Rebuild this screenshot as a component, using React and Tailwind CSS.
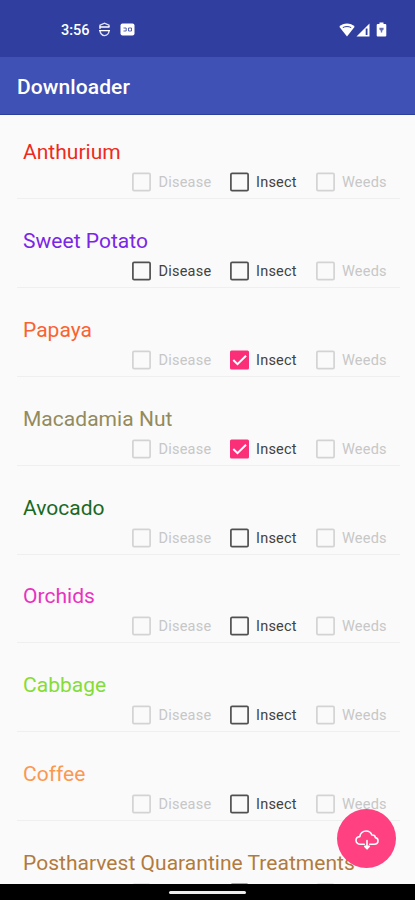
import { useState } from "react";

const crops = [
  { name: "Anthurium", color: "text-[#ee2a20]", enabled: ["Insect"], checked: [] },
  { name: "Sweet Potato", color: "text-[#7a26e6]", enabled: ["Disease", "Insect"], checked: [] },
  { name: "Papaya", color: "text-[#f96332]", enabled: ["Insect"], checked: ["Insect"] },
  { name: "Macadamia Nut", color: "text-[#948a5c]", enabled: ["Insect"], checked: ["Insect"] },
  { name: "Avocado", color: "text-[#19691f]", enabled: ["Insect"], checked: [] },
  { name: "Orchids", color: "text-[#e832c0]", enabled: ["Insect"], checked: [] },
  { name: "Cabbage", color: "text-[#86dc37]", enabled: ["Insect"], checked: [] },
  { name: "Coffee", color: "text-[#fb9850]", enabled: ["Insect"], checked: [] },
  { name: "Postharvest Quarantine Treatments", color: "text-[#b27a3e]", enabled: ["Insect"], checked: [] },
];

const columns = [
  { label: "Disease", width: "w-[97.5px]" },
  { label: "Insect", width: "w-[86px]" },
  { label: "Weeds", width: "w-[84px]" },
];

const StatusBar = () => (
  <div className="h-[57px] shrink-0 bg-[#303f9f] flex items-center justify-between pt-[2px] pl-[61px] pr-[28px] text-white">
    <div className="flex items-center">
      <span className="w-[29px] pt-[3px] text-[14.5px] font-medium leading-none">3:56</span>
      <svg className="ml-[8px]" width="13" height="15" viewBox="0 0 13 15" fill="none" stroke="currentColor" strokeWidth="1.4">
        <path d="M2 5V3.2L6.5 1.2L11 3.2V5M2 8.6C2 11 4 13.6 6.5 13.6C9 13.6 11 11.4 11 8.6M2 5V7" strokeOpacity="0.85" />
        <path d="M1.5 5H11.5M1 8.6H12" />
      </svg>
      <svg className="ml-[9px]" width="15" height="13" viewBox="0 0 15 13">
        <rect x="0.5" y="0.5" width="14" height="12" rx="2" fill="currentColor" />
        <path d="M3.5 5H6.2V8H3.5M8.5 5H11.5V8H8.5Z" fill="none" stroke="#303f9f" strokeOpacity="0.8" strokeWidth="1" />
      </svg>
    </div>
    <div className="flex items-center">
      <svg width="16" height="14" viewBox="0 0 16 14">
        <path d="M0.3 3.7C4.5-0.6 11.5-0.6 15.7 3.7L8 13.5Z" fill="currentColor" />
        <path d="M3.8 4.6C6.2 3.2 9.8 3.2 12.2 4.6" fill="none" stroke="#303f9f" strokeWidth="1" />
      </svg>
      <svg className="ml-[1px]" width="14" height="14" viewBox="0 0 14 14">
        <path d="M13.5 0.5V13.5H0.5Z" fill="currentColor" />
        <path d="M10.6 5.5V12" stroke="#303f9f" strokeWidth="1.8" />
      </svg>
      <svg className="ml-[6px]" width="11" height="15" viewBox="0 0 11 15">
        <path d="M3.5 0.5H7.5V2H9.2Q10.3 2 10.3 3V13.4Q10.3 14.5 9.2 14.5H1.8Q0.7 14.5 0.7 13.4V3Q0.7 2 1.8 2H3.5Z" fill="currentColor" />
        <path d="M3.4 5.8H7.6V7.4L6.2 8.8V10.4H4.8V8.8L3.4 7.4Z" fill="#303f9f" fillOpacity="0.75" />
      </svg>
    </div>
  </div>
);

const CheckOption = ({ label, width, enabled, checked, onToggle }) => (
  <button
    type="button"
    role="checkbox"
    aria-checked={checked}
    disabled={!enabled}
    onClick={onToggle}
    className={`${width} flex items-start shrink-0 text-left`}
  >
    <svg className="shrink-0" width="19" height="20" viewBox="0 0 19 20" fill="none">
      {checked ? (
        <>
          <rect x="0" y="0.5" width="19" height="19" rx="1.5" fill="#fa2f78" />
          <path d="M3.3 10L7.5 14.2L16 5.7" stroke="#fff" strokeWidth="2" />
        </>
      ) : (
        <rect x="0.9" y="1.4" width="17.2" height="17.2" rx="1.2" stroke={enabled ? "#505050" : "#d3d3d3"} strokeWidth="1.7" />
      )}
    </svg>
    <span className={`ml-[7.5px] text-[14.5px] leading-[22px] tracking-[0.22px] ${enabled ? "text-[#424242]" : "text-[#c7c7c7]"}`}>
      {label}
    </span>
  </button>
);

const App = () => {
  const [selected, setSelected] = useState(() =>
    Object.fromEntries(crops.map((crop) => [crop.name, crop.checked]))
  );

  const toggle = (name, label) => {
    setSelected((prev) => ({
      ...prev,
      [name]: prev[name].includes(label)
        ? prev[name].filter((item) => item !== label)
        : [...prev[name], label],
    }));
  };

  return (
    <div className="relative h-screen w-full overflow-hidden flex flex-col bg-[#fafafa] font-['Roboto',sans-serif]">
      <StatusBar />

      <header className="h-[58px] shrink-0 bg-[#3f51b5] border-b border-[#2c3f9c] flex items-center pl-[17px] pt-[5px]">
        <h1 className="text-[21px] font-medium text-white tracking-[0.1px]">Downloader</h1>
      </header>

      {/* Crop list */}
      <main className="flex-1 min-h-0 overflow-hidden flex flex-col gap-[4.9px] pl-[17px] pr-[15px]">
        {crops.map((crop) => (
          <section key={crop.name} className="h-[84px] shrink-0 border-b border-[#efefef] pt-[22px]">
            <h2 className={`pl-[6px] text-[21px] leading-[30px] tracking-[0.03px] whitespace-nowrap ${crop.color}`}>
              {crop.name}
            </h2>
            <div className="flex pl-[115px] mt-[5px]">
              {columns.map((column) => (
                <CheckOption
                  key={column.label}
                  label={column.label}
                  width={column.width}
                  enabled={crop.enabled.includes(column.label)}
                  checked={selected[crop.name].includes(column.label)}
                  onToggle={() => toggle(crop.name, column.label)}
                />
              ))}
            </div>
          </section>
        ))}
      </main>

      {/* Gesture navigation bar */}
      <div className="h-[16px] shrink-0 bg-black flex items-center justify-center">
        <div className="w-[77px] h-[3px] rounded-full bg-[#ececec]" />
      </div>

      {/* Floating download button */}
      <button
        type="button"
        aria-label="Download"
        className="absolute right-[19px] bottom-[32.5px] size-[59px] rounded-full bg-[#ff4081] text-white flex items-center justify-center"
      >
        <svg className="mt-[3px]" width="24" height="20" viewBox="0 0 24 20" fill="none" stroke="currentColor" strokeWidth="1.6" strokeLinecap="round" strokeLinejoin="round">
          <path d="M9.3 14.2H5.3C2.9 14.2 1 12.6 1 10.3C1 8.2 2.6 6.8 4.8 6.6C5 3.3 7.8 1 11 1C13.8 1 16 2.6 16.9 5C19 4.9 20.3 6.1 20.4 7.6C22 8 23 9.2 23 10.7C23 12.8 21.4 14.2 19 14.2H14.7" />
          <path d="M12 10.5V18.5M9.8 16.4L12 18.8L14.2 16.4Z" />
        </svg>
      </button>
    </div>
  );
};

export default App;
